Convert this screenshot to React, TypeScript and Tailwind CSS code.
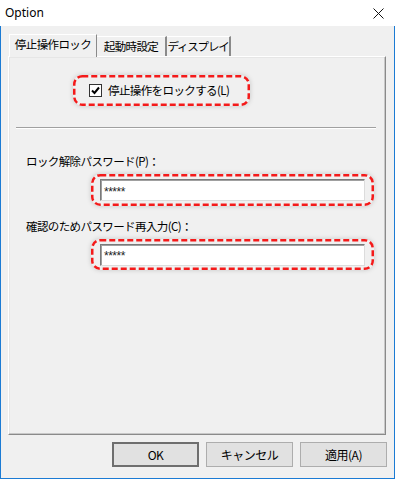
import React from 'react';

const jp = { fontFamily: '"Noto Sans CJK JP", "Noto Sans", sans-serif' };

// red dashed annotation drawn over its contents
const DashBox = ({ w, h, className, children }: { w: number; h: number; className: string; children: React.ReactNode }) => (
  <div className={`relative rounded-[9px] shadow-[0_0_5px_rgba(0,0,0,0.18)] ${className}`}>
    {children}
    <svg className="absolute inset-0 pointer-events-none" width={w} height={h}>
      <rect x={1.25} y={1.25} width={w - 2.5} height={h - 2.5} rx={8} fill="none" stroke="#f41a1a" strokeWidth={2.5} strokeDasharray="6 3" />
    </svg>
  </div>
);

const PwInput = () => (
  <div className="w-[265px] h-[22px] bg-white border border-t-[#7a7a7a] border-l-[#7a7a7a] border-r-[#dcdcdc] border-b-[#dcdcdc] shadow-[inset_1px_1px_0_#a0a0a0] flex items-center pl-[3px]">
    <span className="text-[12px] leading-none text-[#222] tracking-[-0.5px] pt-[3px]" style={{ fontFamily: '"Liberation Sans", sans-serif' }}>*****</span>
  </div>
);

const Btn = ({ label, primary }: { label: string; primary?: boolean }) => (
  <button
    className={`w-[87px] h-[25px] bg-[#e1e1e1] text-[12px] tracking-[-0.5px] text-black flex items-center justify-center ${
      primary ? 'border-2 border-[#6e6e6e]' : 'border border-[#adadad]'
    }`}
    style={jp}
  >
    {label}
  </button>
);

export default function App() {
  return (
    <div className="w-[395px] h-[479px] flex flex-col bg-white text-black" style={jp}>
      {/* Title bar */}
      <div className="h-[26px] shrink-0 bg-white flex items-center justify-between pl-[5px] pr-[11px]">
        <span className="text-[12px] text-black" style={{ fontFamily: '"Noto Sans", sans-serif' }}>Option</span>
        <svg width="11" height="11" viewBox="0 0 11 11">
          <path d="M0.5 0.5 L10.5 10.5 M10.5 0.5 L0.5 10.5" stroke="#111" strokeWidth="1" />
        </svg>
      </div>

      {/* Body */}
      <div className="flex-1 bg-[#f0f0f0] border-x border-b border-[#1b7bd4] flex flex-col px-[7px] pt-[9px]">
        {/* Tabs */}
        <div className="flex items-end h-[22px] pl-[1px] relative z-10 -mb-[1px] whitespace-nowrap">
          <div className="w-[88px] h-[23px] bg-[#f0f0f0] border-l border-t border-white border-r border-r-[#8a8a8a] flex items-center justify-center text-[11.5px] tracking-[-0.6px] pb-[2px]">
            停止操作ロック
          </div>
          <div className="w-[70px] h-[20px] mb-[1px] bg-[#f0f0f0] border-t border-white border-r-2 border-r-[#8a8a8a] flex items-center justify-center text-[11.5px] tracking-[-0.6px]">
            起動時設定
          </div>
          <div className="w-[64px] h-[20px] mb-[1px] bg-[#f0f0f0] border-t border-white border-r-2 border-r-[#8a8a8a] flex items-center justify-center text-[11.5px] tracking-[-1.2px]">
            ディスプレイ
          </div>
        </div>

        {/* Panel */}
        <div className="w-[378px] h-[379px] shrink-0 border-l border-t border-white border-r border-b border-r-[#8a8a8a] border-b-[#8a8a8a] shadow-[inset_-1px_-1px_0_#c8c8c8,inset_1px_1px_0_#e6e6e6] flex flex-col">
          <DashBox w={177} h={31} className="w-[177px] h-[31px] ml-[64px] mt-[18px] flex items-center pl-[16px] gap-[6px]">
            <span className="w-[13px] h-[13px] bg-white border border-[#333] flex items-center justify-center">
              <svg width="9" height="9" viewBox="0 0 9 9">
                <path d="M1 4.5 L3.5 7 L8 1.5" fill="none" stroke="#000" strokeWidth="2" />
              </svg>
            </span>
            <span className="text-[11.5px] tracking-[-0.6px]">停止操作をロックする(L)</span>
          </DashBox>

          <div className="ml-[7px] mt-[21px] w-[360px] h-[2px] border-t border-[#a0a0a0] border-b border-b-white" />

          <div className="ml-[17px] mt-[25px] h-[16px] flex items-center text-[11.5px] tracking-[-0.6px]">ロック解除パスワード(P)：</div>
          <DashBox w={283} h={32} className="w-[283px] h-[32px] ml-[82px] mt-[4px] flex items-center pl-[9px]">
            <PwInput />
          </DashBox>

          <div className="ml-[17px] mt-[13px] h-[16px] flex items-center text-[11.5px] tracking-[-0.6px]">確認のためパスワード再入力(C)：</div>
          <DashBox w={283} h={31} className="w-[283px] h-[31px] ml-[82px] mt-[4px] flex items-center pl-[9px]">
            <PwInput />
          </DashBox>
        </div>

        {/* Buttons */}
        <div className="flex justify-end gap-[7px] mt-[7px]">
          <Btn label="OK" primary />
          <Btn label="キャンセル" />
          <Btn label="適用(A)" />
        </div>
      </div>
    </div>
  );
}
